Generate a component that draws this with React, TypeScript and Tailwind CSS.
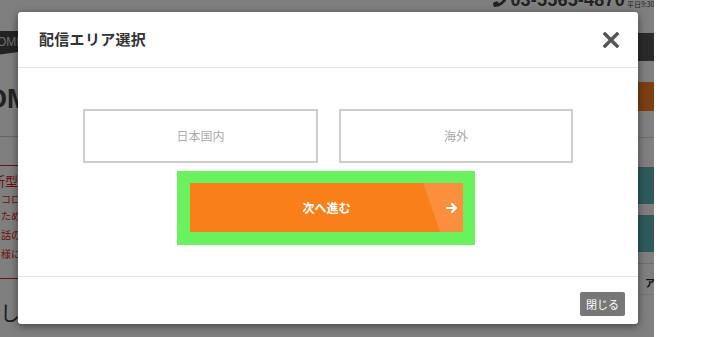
import { FaPhoneAlt } from "react-icons/fa";

function ArrowIcon() {
    return (
        <svg width="12" height="10" viewBox="0 0 12 10" fill="none">
            <path d="M0.5 5h9.5M6 1l4 4-4 4" stroke="white" strokeWidth="2.2" strokeLinecap="round" strokeLinejoin="round" />
        </svg>
    );
}

function CloseIcon() {
    return (
        <svg width="16" height="16" viewBox="0 0 16 16" fill="none">
            <path d="M2 2l12 12M14 2L2 14" stroke="#555" strokeWidth="3.4" strokeLinecap="square" />
        </svg>
    );
}

// dimmed page behind the modal
function BackgroundPage() {
    return (
        <div className="w-[654px] h-full bg-white overflow-hidden flex flex-col">
            {/* header phone */}
            <div className="h-[12px] overflow-hidden flex justify-end items-start font-['Liberation_Sans',sans-serif] text-[#444]">
                <div className="-mt-[9px] flex items-end gap-[2px] whitespace-nowrap mr-[-25px]">
                    <FaPhoneAlt className="text-[15px] -scale-x-100 mb-[2px]" />
                    <span className="text-[18px] leading-[18px] font-bold tracking-[0.2px]">03-5565-4870</span>
                    <span className="text-[7px] leading-[10px] font-['Noto_Sans_CJK_JP',sans-serif]">平日9:30〜18:00</span>
                </div>
            </div>

            <div className="flex-1 flex">
                {/* left column */}
                <div className="w-[80px] -ml-[20px] flex flex-col whitespace-nowrap font-['Noto_Sans_CJK_JP',sans-serif]">
                    <div className="mt-[19px] h-[26px] bg-[#444] [clip-path:polygon(0_0,100%_0,100%_100%,50%_80%,0_100%)] flex items-start pt-[4px] pl-[17px]">
                        <span className="text-[12px] leading-[14px] text-[#ddd] font-['Liberation_Sans',sans-serif]">OMI</span>
                    </div>
                    <div className="mt-[29px] h-[26px] flex items-center pl-[6px] text-[27px] font-bold text-[#444] leading-none font-['Liberation_Sans',sans-serif]">
                        OM
                    </div>
                    <div className="mt-[24px] h-px bg-[#ccc]" />
                    <div className="mt-[28px] h-px bg-[#d22]" />
                    <div className="flex flex-col pl-[18px] text-[#dd2020]">
                        <span className="mt-[7px] text-[13px] leading-[16px] -ml-[6px]">新型コロナ</span>
                        <span className="mt-[3px] text-[10px] leading-[14px] pl-[3px]">コロナウイルス</span>
                        <span className="mt-[3px] text-[10px] leading-[14px] pl-[3px]">ためお客様</span>
                        <span className="mt-[5px] text-[10px] leading-[14px] pl-[3px]">話の受付は</span>
                        <span className="mt-[5px] text-[10px] leading-[14px] pl-[3px]">様にはご迷惑</span>
                    </div>
                    <div className="mt-[17px] h-px bg-[#d22]" />
                    <div className="mt-[22px] pl-[20px] text-[20px] leading-[24px] text-[#333]">しお知らせ</div>
                </div>

                <div className="flex-1" />

                {/* right column */}
                <div className="w-[40px] flex flex-col font-['Noto_Sans_CJK_JP',sans-serif]">
                    <div className="mt-[21px] h-[28px] bg-[#555]" />
                    <div className="mt-[21px] h-[29px] bg-[#f67e24]" />
                    <div className="mt-[26px] h-px bg-[#ddd]" />
                    <div className="mt-[29px] h-[37px] bg-[#5cb5b9]" />
                    <div className="mt-[11px] h-[37px] bg-[#5cb5b9]" />
                    <div className="mt-[11px] h-px bg-[#ddd]" />
                    <div className="mt-[13px] pl-[31px] text-[10px] leading-[12px] font-bold text-[#222]">ア</div>
                    <div className="mt-[5px] h-px bg-[#e8e8e8]" />
                </div>
            </div>
        </div>
    );
}

export default function App() {
    return (
        <div className="relative w-[718px] h-[337px] bg-white overflow-hidden font-['Noto_Sans_CJK_JP','Liberation_Sans',sans-serif]">
            <BackgroundPage />

            {/* overlay */}
            <div className="absolute top-0 left-0 w-[654px] h-full bg-black/50" />

            {/* modal */}
            <div className="absolute left-[18px] top-[12px] w-[620px] h-[312px] bg-white rounded-[3px] shadow-[0_2px_9px_rgba(0,0,0,0.5)] flex flex-col">
                <div className="h-[56px] shrink-0 border-b border-[#e5e5e5] flex items-center justify-between pl-[21px] pr-[19px]">
                    <h2 className="text-[15px] font-bold text-[#333] tracking-[0.3px]">配信エリア選択</h2>
                    <button className="w-[16px] h-[16px] flex items-center justify-center">
                        <CloseIcon />
                    </button>
                </div>

                <div className="h-[208px] shrink-0 flex flex-col items-center pt-[41px]">
                    <div className="flex gap-[21px]">
                        <button className="w-[235px] h-[54px] border-2 border-[#ccc] bg-white text-[12px] text-[#aaa] flex items-center justify-center">
                            日本国内
                        </button>
                        <button className="w-[234px] h-[54px] border-2 border-[#ccc] bg-white text-[12px] text-[#aaa] flex items-center justify-center">
                            海外
                        </button>
                    </div>

                    <div className="mt-[8px] -ml-[4px] w-[298px] h-[74px] bg-[#6af25e] pt-[12px] pl-[13px]">
                        <button className="relative w-[273px] h-[49px] bg-[#f97f1a] flex items-center justify-center text-white text-[12px] font-bold">
                            <span className="absolute right-0 top-0 h-full w-[40px] bg-[#fb8f3e] [clip-path:polygon(0_0,100%_0,100%_100%,43%_100%)]" />
                            <span className="relative">次へ進む</span>
                            <span className="absolute right-[5px] top-[20px]">
                                <ArrowIcon />
                            </span>
                        </button>
                    </div>
                </div>

                <div className="flex-1 border-t border-[#e5e5e5] flex justify-end items-start pt-[15px] pr-[13px]">
                    <button className="w-[45px] h-[24px] bg-[#777] rounded-[2px] text-white text-[11px] flex items-center justify-center">
                        閉じる
                    </button>
                </div>
            </div>
        </div>
    );
}
